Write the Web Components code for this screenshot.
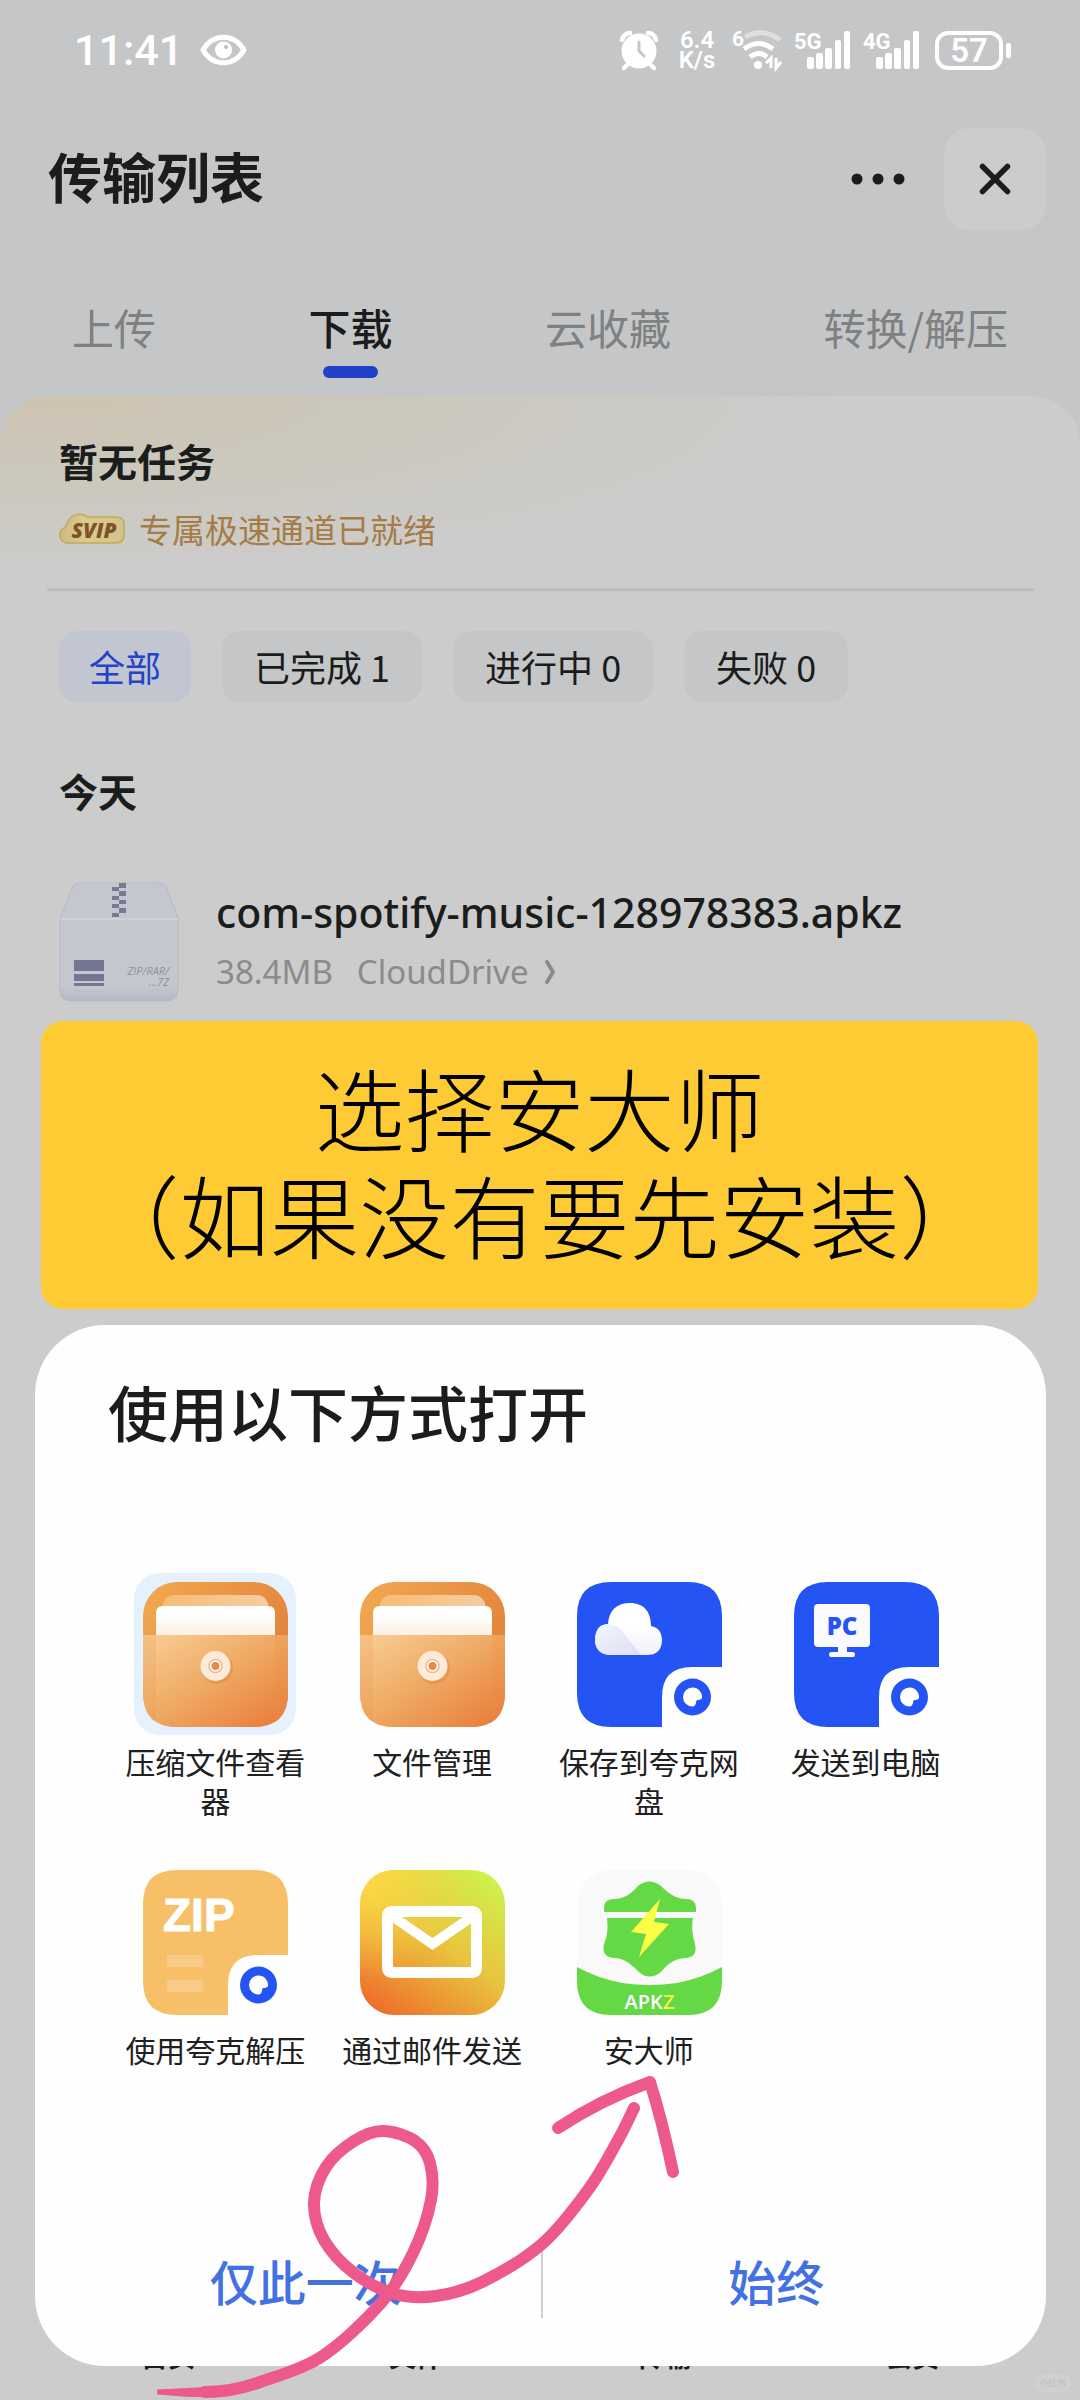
<!DOCTYPE html>
<html lang="zh-CN">
<head>
<meta charset="utf-8">
<meta name="viewport" content="width=device-width, initial-scale=1">
<title>传输列表</title>
<style>
  html, body { margin: 0; }
  body {
    font-family: "Noto Sans CJK SC", "Noto Sans", sans-serif;
    color: #1b1c1c;
    background: #c4c6c8;
  }
</style>
</head>
<body>
<app-screen>
  <status-bar></status-bar>
  <page-header>传输列表</page-header>
  <tab-bar></tab-bar>
  <transfer-panel>
    <task-summary></task-summary>
    <filter-chips></filter-chips>
    <file-row name="com-spotify-music-128978383.apkz" size="38.4MB" source="CloudDrive"></file-row>
  </transfer-panel>
  <bottom-nav></bottom-nav>
  <note-callout slot="overlay">选择安大师<br>（如果没有要先安装）</note-callout>
  <open-sheet slot="overlay">
    <app-choice icon="folder" selected>压缩文件查看器</app-choice>
    <app-choice icon="folder">文件管理</app-choice>
    <app-choice icon="cloud">保存到夸克网盘</app-choice>
    <app-choice icon="pc">发送到电脑</app-choice>
    <app-choice icon="zip">使用夸克解压</app-choice>
    <app-choice icon="mail">通过邮件发送</app-choice>
    <app-choice icon="apkz">安大师</app-choice>
  </open-sheet>
  <drawn-arrow slot="ink"></drawn-arrow>
  <corner-mark slot="ink">小红书</corner-mark>
</app-screen>

<script>
const define = (name, html, setup) => {
  const template = document.createElement('template');
  customElements.define(name, class extends HTMLElement {
    connectedCallback() {
      if (this.shadowRoot) return;
      template.innerHTML = typeof html === 'function' ? html(this) : html;
      this.attachShadow({ mode: 'open' }).append(template.content.cloneNode(true));
      if (setup) setup(this.shadowRoot, this);
    }
  });
};
const reset = `*{box-sizing:border-box} button{font:inherit;color:inherit;border:0;background:none;padding:0;margin:0;cursor:pointer} svg{display:block}`;

define('app-screen', `
<style>${reset}
:host{display:flex;flex-direction:column;position:relative;min-height:100vh;overflow:hidden}
main{display:flex;flex-direction:column;flex:1}
.overlay{position:absolute;inset:0;display:flex;flex-direction:column;justify-content:flex-end;gap:16px;padding:0 34px 34px 35px}
</style>
<main><slot></slot></main>
<div class="overlay"><slot name="overlay"></slot></div>
<slot name="ink"></slot>`);

const signal = net => `
<svg width="57" height="40" viewBox="0 0 57 40" fill="#fff">
  <text x="0" y="19" font-size="22" font-weight="700">${net}</text>
  <rect x="13" y="27" width="7" height="12" rx="2"/><rect x="22" y="23" width="7" height="16" rx="2"/>
  <rect x="31" y="18" width="7" height="21" rx="2"/><rect x="41" y="10" width="6" height="29" rx="2"/>
  <rect x="50" y="1" width="6" height="38" rx="2"/>
</svg>`;

define('status-bar', `
<style>${reset}
:host{display:flex;align-items:center;justify-content:space-between;height:100px;padding:0 69px 0 74px;color:#fff;font-family:Roboto,"Noto Sans",sans-serif}
.left,.right{display:flex;align-items:center}
.left{gap:17px}
.time{font-size:43px;font-weight:500;line-height:60px}
.right{gap:12px}
.speed{width:38px;font-size:24px;font-weight:600;line-height:20px;text-align:center;margin:0 4px 0 8px}
svg{overflow:visible}
.battery{margin-left:3px}
</style>
<div class="left">
  <span class="time">11:41</span>
  <svg width="47" height="32" viewBox="0 0 47 32" fill="none"><path d="M3 16C13-1 34-1 44 16C34 33 13 33 3 16Z" stroke="#fff" stroke-width="5" stroke-linejoin="round"/><circle cx="23.500" cy="16" r="8.500" fill="#fff"/><circle cx="26" cy="13" r="2" fill="#b8babc"/></svg>
</div>
<div class="right">
  <svg width="38" height="40" viewBox="0 0 38 40"><circle cx="19" cy="21" r="17.500" fill="#fff"/><path d="M2 10Q4 3 10 3M36 10Q34 3 28 3M9 33L4 38M29 33L34 38" stroke="#fff" stroke-width="4.500" fill="none" stroke-linecap="round"/><path d="M19 12V21L24 26" stroke="#c4c6c8" stroke-width="3" fill="none" stroke-linecap="round"/></svg>
  <div class="speed">6.4<br>K/s</div>
  <svg width="50" height="40" viewBox="0 0 50 40" fill="none" stroke-width="5">
    <text x="0" y="16" font-size="21" font-weight="700" fill="#fff">6</text>
    <path d="M13 7Q31-3 48 10" stroke="#dddedf"/><path d="M12 19Q27 8 41 19" stroke="#fff"/><path d="M18 27Q27 20 35 27" stroke="#fff"/><circle cx="26" cy="35" r="4" fill="#fff"/>
    <path d="M39 38V28L34 33M44 28V38L49 32" stroke="#fff" stroke-width="3"/>
  </svg>
  ${signal('5G')}${signal('4G')}
  <svg class="battery" width="76" height="40" viewBox="0 0 76 40"><rect x="2" y="3" width="64" height="35" rx="11" fill="none" stroke="#fff" stroke-width="4"/><rect x="71" y="13" width="5" height="15" rx="2" fill="#fff"/><text x="34" y="32" text-anchor="middle" font-size="33" font-weight="600" fill="#fff">57</text></svg>
</div>`);

define('page-header', `
<style>${reset}
:host{display:flex;align-items:center;justify-content:space-between;padding:28px 34px 0 48px}
h1{margin:0;padding-bottom:6px;font-size:54px;line-height:80px;font-weight:700}
.actions{display:flex;align-items:center;gap:26px}
button{display:grid;place-items:center;width:80px;height:102px}
.close{width:102px;background:#ccc;border-radius:26px}
</style>
<h1><slot></slot></h1>
<div class="actions">
  <button aria-label="更多"><svg width="56" height="12" viewBox="0 0 56 12" fill="#1b1c1c"><circle cx="7" cy="6" r="5.500"/><circle cx="28" cy="6" r="5.500"/><circle cx="49" cy="6" r="5.500"/></svg></button>
  <button class="close" aria-label="关闭"><svg width="34" height="34" viewBox="0 0 34 34" stroke="#1b1c1c" stroke-width="5.500" stroke-linecap="round"><path d="M4.500 4.500L29.500 29.500M29.500 4.500L4.500 29.500"/></svg></button>
</div>`);

define('tab-bar', `
<style>${reset}
:host{display:block;padding:67px 72px 18px}
nav{display:flex;justify-content:space-between}
button{display:flex;flex-direction:column;align-items:center;gap:9px;font-size:42px;line-height:60px;color:#7f8080}
button::after{content:"";width:55px;height:12px;border-radius:6px}
.on{color:#1b1c1c;font-weight:500}
.on::after{background:#1e41c8}
</style>
<nav><button>上传</button><button class="on">下载</button><button>云收藏</button><button>转换/解压</button></nav>`);

define('transfer-panel', `
<style>
:host{display:flex;flex-direction:column;flex:1;padding:39px 59px 0;border-radius:48px 48px 0 0;
background:radial-gradient(ellipse 780px 180px at 50px 0,#cfc3b1 0,#cbc7ba 35%,#ccc9c500 100%),#ccc}
</style><slot></slot>`);

define('task-summary', `
<style>${reset}
:host{display:block}
h2{margin:0 0 24px;font-size:39px;line-height:50px;font-weight:700}
p{display:flex;align-items:center;gap:14px;margin:0 0 39px;font-size:33px;line-height:40px;color:#a57c46}
hr{border:0;height:3px;margin:0 -13px 0 -12px;background:#bebebe}
</style>
<h2>暂无任务</h2>
<p><svg width="66" height="32" viewBox="0 0 66 32"><defs><linearGradient id="g"><stop offset="0" stop-color="#cdb981"/><stop offset=".4" stop-color="#dccb90"/><stop offset="1" stop-color="#d2c28b"/></linearGradient></defs><path d="M8 30C0 29-2 19 5 15C8 13 8 10 10 7C14 0 24 0 28 4L57 4Q65 4 65 11V22Q65 30 57 30Z" fill="url(#g)" stroke="#c3aa5b" stroke-width="1.500"/><text x="35" y="25" text-anchor="middle" font-family="Open Sans" font-style="italic" font-weight="800" font-size="21" fill="#7d5427">SVIP</text></svg><span>专属极速通道已就绪</span></p>
<hr>`);

define('filter-chips', `
<style>${reset}
:host{display:flex;gap:31px;padding:40px 0 63px}
button{height:71px;padding:0 32px 2px;border-radius:18px;background:#c4c6c8;font-size:36px;line-height:50px}
.on{padding:0 30px 2px;background:#c1c6d1;color:#2443c6}
</style>
<button class="on">全部</button><button>已完成 1</button><button>进行中 0</button><button>失败 0</button>`);

define('file-row', el => `
<style>${reset}
:host{display:block}
h2{margin:0 0 67px;font-size:39px;line-height:50px;font-weight:700}
.row{display:flex;align-items:center;gap:37px;font-family:"Noto Sans",sans-serif}
.text{padding-bottom:3px}
.name{font-size:41px;line-height:48px;font-weight:500}
.meta{display:flex;align-items:center;gap:24px;margin-top:14px;font-size:33px;line-height:44px;color:#8a8b8b}
a{display:flex;align-items:center;gap:15px;color:inherit;text-decoration:none}
svg text{font-family:"Open Sans",sans-serif;font-style:italic}
</style>
<h2>今天</h2>
<div class="row">
<svg width="120" height="120" viewBox="0 0 120 120">
  <defs><linearGradient id="b" x2="0" y2="1"><stop stop-color="#c4c7ce"/><stop offset=".88" stop-color="#c5c7ce"/><stop offset="1" stop-color="#b4b7c5"/></linearGradient></defs>
  <path d="M14 4Q16 1 20 1H100Q105 1 107 4L119 36V108Q119 119 108 119H12Q1 119 1 108V36Z" fill="url(#b)" stroke="#b7bac6"/>
  <path d="M1 37H119" stroke="#d1d3d8" stroke-width="1.500"/>
  <g fill="#777b92"><path d="M60 1h7v5h-7zM60 9h7v5h-7zM60 18h7v4h-7zM60 26h7v5h-7zM53 5h7v4h-7zM53 14h7v4h-7zM53 22h7v4h-7zM53 31h7v4h-7z"/></g>
  <g fill="#737792"><path d="M15 78h30v11H15zM15 92h30v7H15zM15 101h30v3H15z"/></g>
  <text x="110" y="93" text-anchor="end" font-size="11" fill="#8f91a1">ZIP/RAR/</text><text x="110" y="104" text-anchor="end" font-size="11" fill="#8f91a1">...7Z</text>
</svg>
<div class="text"><div class="name">${el.getAttribute('name')}</div>
<div class="meta"><span>${el.getAttribute('size')}</span><a href="#">${el.getAttribute('source')}<svg width="12" height="26" viewBox="0 0 12 26"><path d="M3 3L9 13L3 23" fill="none" stroke="#8a8b8b" stroke-width="4" stroke-linecap="round" stroke-linejoin="round"/></svg></a></div></div>
</div>`);

define('bottom-nav', `
<style>${reset}
:host{display:block;background:#ccc;padding:0 44px 24px}
nav{display:grid;grid-template-columns:repeat(4,1fr)}
button{font-size:27px;line-height:40px;font-weight:700}
</style><nav><button>首页</button><button>文件</button><button>传输</button><button>会员</button></nav>`);

define('note-callout', `
<style>
:host{display:block;margin:0 8px 0 6px;padding:32px 20px 42px;border-radius:22px;background:#ffcb34;color:#000;font-size:90px;font-weight:300;line-height:107px;text-align:center}
</style><slot></slot>`);

define('open-sheet', `
<style>${reset}
:host{display:block;padding:46px 36px 48px;border-radius:70px;background:#fefefe}
h2{margin:0 37px 122px;font-size:60px;line-height:80px;font-weight:500}
.apps{display:grid;grid-template-columns:repeat(4,1fr);row-gap:41px;margin:0 36px 175px}
.actions{display:grid;grid-template-columns:1fr 1fr;color:#4371e2;font-size:48px;font-weight:500;line-height:74px}
.actions button{padding-bottom:2px;line-height:72px}
.actions button + button{border-left:2px solid #d0d0d0}
</style>
<h2>使用以下方式打开</h2>
<div class="apps"><slot></slot></div>
<div class="actions"><button>仅此一次</button><button>始终</button></div>`);

const quarkBase = fill => `<path d="M34 0H111Q145 0 145 34V85H115Q85 85 85 115V145H34Q0 145 0 111V34Q0 0 34 0Z" fill="${fill}"/>
<circle cx="115.500" cy="115" r="18.500" fill="#2454f4"/><path d="M115.500 105.500A9.500 9.500 0 0 1 125 116Q124 118 120 118Q119 119 119 121Q118 124.500 115.500 124.500A9.500 9.500 0 0 1 115.500 105.500Z" fill="#fff"/>`;
const art = {
  folder: `<defs>
    <linearGradient id="fb" x2="1" y2=".6"><stop stop-color="#f1a950"/><stop offset="1" stop-color="#e2803a"/></linearGradient>
    <linearGradient id="ff" x2="1" y2="1"><stop stop-color="#f8cf97"/><stop offset=".5" stop-color="#eea862"/><stop offset="1" stop-color="#ea7838"/></linearGradient>
    <linearGradient id="fp" x2="0" y2="1"><stop offset=".3" stop-color="#fff"/><stop offset="1" stop-color="#fcf0e4"/></linearGradient>
    <linearGradient id="ft"><stop stop-color="#f6bd76"/><stop offset="1" stop-color="#f5cda1"/></linearGradient></defs>
    <rect width="145" height="145" rx="34" fill="url(#fb)"/>
    <path d="M19 30Q19 13 32 13H113Q126 13 126 30Z" fill="url(#ft)"/>
    <path d="M13 53V31Q13 24 20 24H125Q132 24 132 31V53Z" fill="url(#fp)"/>
    <path d="M0 53H145V111Q145 145 111 145H34Q0 145 0 111Z" fill="url(#ff)"/>
    <path d="M0 53H13V140Q0 132 0 111ZM132 53H145V111Q145 132 132 140Z" fill="#ec9140" opacity=".2"/>
    <circle cx="74" cy="86" r="16" fill="#d9813c" opacity=".4"/><circle cx="72.500" cy="84" r="15" fill="#fdebda"/><circle cx="72.500" cy="84" r="6.500" fill="#fff" stroke="#edb98a" stroke-width="1.500"/><circle cx="72.500" cy="84" r="4" fill="#e58a49"/>`,
  cloud: quarkBase('#2454f4') + `<defs><linearGradient id="c" x2="0" y2="1"><stop offset=".5" stop-color="#fff"/><stop offset="1" stop-color="#eff0fc"/></linearGradient><linearGradient id="cs" x2="1" y2="1"><stop stop-color="#f4f5fc"/><stop offset="1" stop-color="#dcdff5"/></linearGradient></defs>
    <path d="M33 73Q18 72 18 57Q19 42 31 42C32 28 40 21 53 21C67 21 74 30 74 44Q85 46 85 59Q84 73 70 73Z" fill="url(#c)"/>
    <path d="M33 73Q18 72 18 57Q19 42 33 42Q43 44 49 54L64 73Z" fill="url(#cs)"/>`,
  pc: quarkBase('#2454f4') + `<path d="M24 22H72Q76 22 76 26V61Q76 65 72 65H53V70H59Q61 70 61 72.500T59 75H37Q35 75 35 72.500T37 70H44V65H24Q20 65 20 61V26Q20 22 24 22Z" fill="#fbfbff"/><text x="48" y="53" text-anchor="middle" font-weight="800" font-size="24" fill="#2454f4">PC</text>`,
  zip: quarkBase('#f6bf68') + `<text class="zip" x="20" y="61" font-weight="700" font-size="46" fill="#fff" stroke="#fff">ZIP</text><path d="M24 85H60V97H24ZM24 110H60V122H24Z" fill="#f8cc88"/>`,
  mail: `<defs><linearGradient id="m" x1=".1" y1="1" x2=".8" y2="0"><stop stop-color="#ee6a2a"/><stop offset=".55" stop-color="#e9c43e"/><stop offset="1" stop-color="#cff04b"/></linearGradient><radialGradient id="mt" cx="0" cy="0" r=".75"><stop stop-color="#ffda46"/><stop offset="1" stop-color="#ffda46" stop-opacity="0"/></radialGradient></defs>
    <rect width="145" height="145" rx="34" fill="url(#m)"/><rect width="145" height="145" rx="34" fill="url(#mt)"/>
    <rect x="27.500" y="41.500" width="89" height="61" rx="4" fill="none" stroke="#fff" stroke-width="11"/><path d="M32 46L72.500 74L113 46" fill="none" stroke="#fff" stroke-width="10"/>`,
  apkz: `<rect width="145" height="145" rx="34" fill="#f9f9f9"/>
    <g fill="#65d845"><path d="M0 97Q20 108 45 113Q72 117 100 113Q125 108 145 97V111Q145 145 111 145H34Q0 145 0 111Z"/>
    <path d="M27 42V38Q27 29 37 29C48 29 56 22 61 16Q72 7 84 16C90 22 98 29 109 29Q119 29 119 38V42Z"/>
    <path d="M30 48H116C114 58 116 66 118 74Q121 87 109 88C96 88 88 97 84 102Q72 111 62 102C56 96 48 88 37 88Q24 87 27 74C31 64 31 58 30 48Z"/></g>
    <path d="M83 29L54 62L69 64L62 87L92 54L77 52Z" fill="#fdff45"/>
    <text x="72.500" y="139" text-anchor="middle" font-weight="600" font-size="20" fill="#fff">APK<tspan fill="#f4f53f">Z</tspan></text>`
};
define('app-choice', el => `
<style>${reset}
:host{display:block}
button{display:flex;flex-direction:column;align-items:center;gap:7px;width:100%;color:#202020;font-size:30px;line-height:39px}
.icon{padding:9px 8px 8px 9px;border-radius:26px}
:host([selected]) .icon{background:#e6f1fe}
.label{max-width:180px;text-align:center}
svg text{font-family:"Open Sans",sans-serif}
svg .zip{font-family:"Liberation Sans",sans-serif}
</style>
<button><span class="icon"><svg width="145" height="145" viewBox="0 0 145 145">${art[el.getAttribute('icon')]}</svg></span><span class="label"><slot></slot></span></button>`);

/* Freehand arrow: a smooth curve through the sampled pen points. */
define('drawn-arrow', `
<style>:host{position:absolute;left:0;bottom:0;pointer-events:none} svg{display:block}</style>
<svg width="700" height="330" viewBox="0 2070 700 330" fill="none" stroke="#ed598a" stroke-width="12" stroke-linecap="round" stroke-linejoin="round">
<path class="tail"/><path d="M558 2128Q600 2100 650 2082Q662 2120 673 2172"/><path d="M158 2390L215 2387L215 2397Q185 2397 158 2394Z" fill="#ed598a" stroke-width="1"/></svg>`,
root => {
  const p = [[205,2392],[230,2390],[260,2382],[321,2357],[381,2303],[413,2253],[431,2200],[430,2163],[415,2141],[383,2131],[354,2141],[326,2167],[314,2203],[324,2240],[354,2273],[395,2294],[436,2296],[482,2282],[542,2244],[588,2190],[618,2140],[634,2108]];
  let d = `M${p[0]}`;
  for (let i = 0; i < p.length - 1; i++) {
    const a = p[i - 1] || p[i], b = p[i], c = p[i + 1], e = p[i + 2] || c;
    d += `C${b[0] + (c[0] - a[0]) / 6} ${b[1] + (c[1] - a[1]) / 6} ${c[0] - (e[0] - b[0]) / 6} ${c[1] - (e[1] - b[1]) / 6} ${c}`;
  }
  root.querySelector('.tail').setAttribute('d', d);
});

define('corner-mark', `
<style>:host{position:absolute;right:9px;bottom:8px;padding:0 5px;border-radius:9px;background:#d0d0d0;color:#bfbfbf;font-size:9px;line-height:18px}</style><slot></slot>`);
</script>
</body>
</html>
